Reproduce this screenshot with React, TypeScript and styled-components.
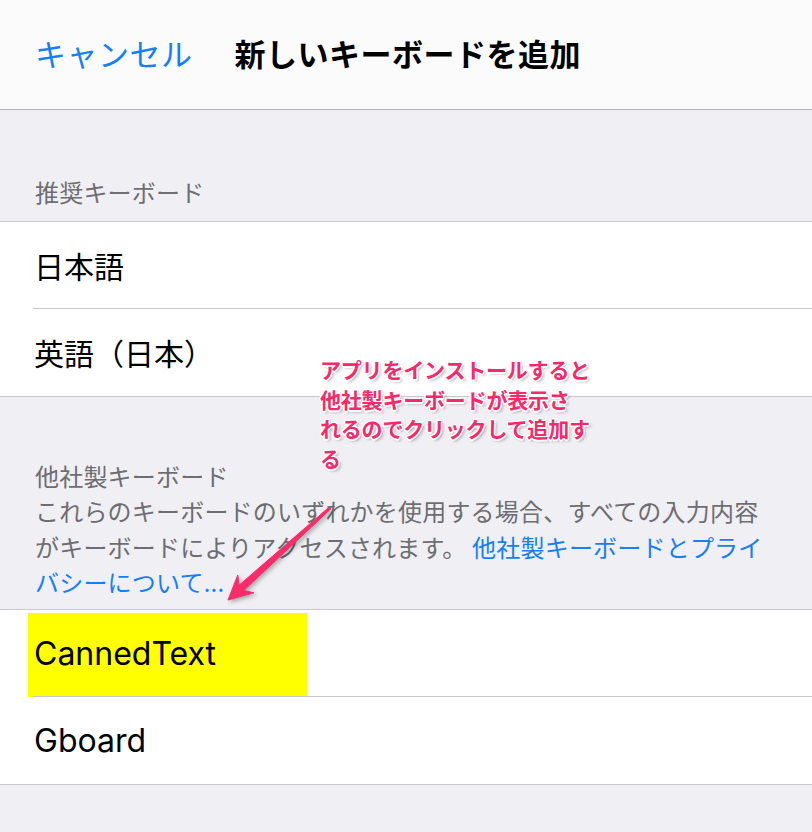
import React from "react";
import styled, { createGlobalStyle } from "styled-components";

const Global = createGlobalStyle`
  html, body { margin: 0; padding: 0; }
  body {
    font-family: Inter, "Noto Sans CJK JP", sans-serif;
    background: #efeff4;
  }
`;

const Page = styled.div`
  position: relative;
  width: 812px;
  min-height: 832px;
  background: #efeff4;
  overflow: hidden;
`;

const NavBar = styled.header`
  height: 110px;
  box-sizing: border-box;
  padding: 0 0 5px 35px;
  background: #fbfbfc;
  border-bottom: 1px solid #b4b4b8;
  display: flex;
  align-items: center;
  gap: 42px;
`;

const CancelButton = styled.span`
  font-family: "Noto Sans CJK JP", sans-serif;
  font-size: 31px;
  color: #147efb;
  letter-spacing: 0.5px;
`;

const Title = styled.h1`
  margin: 0;
  font-family: "Noto Sans CJK JP", sans-serif;
  font-size: 31px;
  font-weight: 700;
  color: #000;
  letter-spacing: 0.5px;
`;

const SectionText = styled.div<{ $top: number; $bottom: number }>`
  width: 735px;
  padding: ${(p) => p.$top}px 0 ${(p) => p.$bottom}px 35px;
  font-family: "Noto Sans CJK JP", sans-serif;
  font-size: 24px;
  line-height: 35.5px;
  letter-spacing: 0.2px;
  color: #6d6d72;
`;

const Link = styled.span`
  color: #147efb;
`;

const Group = styled.div`
  background: #fff;
  border-top: 1px solid #c8c7cc;
  border-bottom: 1px solid #c8c7cc;
`;

const Row = styled.div<{ $divider?: boolean; $latin?: boolean }>`
  position: relative;
  height: 87px;
  display: flex;
  align-items: center;
  padding-left: 34px;
  font-size: ${(p) => (p.$latin ? 32 : 30)}px;
  color: #000;
  ${(p) =>
    p.$divider
      ? `
    &::after {
      content: "";
      position: absolute;
      left: 33px;
      right: 0;
      bottom: 0;
      height: 1px;
      background: #c8c7cc;
    }
  `
      : ""}
`;

const Label = styled.span`
  position: relative;
  z-index: 1;
`;

const Highlight = styled.div`
  position: absolute;
  left: 28px;
  top: 3px;
  width: 279px;
  height: 84px;
  background: #ffff00;
  z-index: 0;
`;

const Note = styled.div`
  position: absolute;
  left: 320px;
  top: 355px;
  font-family: "Noto Sans CJK JP", sans-serif;
  font-size: 21px;
  font-weight: 700;
  line-height: 29.5px;
  color: #f8286a;
  letter-spacing: -0.2px;
  text-shadow:
    -1px -1px 0 #fff, 1px -1px 0 #fff, -1px 1px 0 #fff, 1px 1px 0 #fff,
    0 -1.5px 0 #fff, 0 1.5px 0 #fff, -1.5px 0 0 #fff, 1.5px 0 0 #fff,
    2px 2px 3px rgba(0, 0, 0, 0.35);
  z-index: 3;
`;

const ArrowLayer = styled.svg`
  position: absolute;
  left: 0;
  top: 0;
  width: 812px;
  height: 832px;
  pointer-events: none;
  z-index: 4;
  filter: drop-shadow(2px 2px 2px rgba(0, 0, 0, 0.3));
`;

export default function App() {
  return (
    <Page>
      <Global />
      <NavBar>
        <CancelButton>キャンセル</CancelButton>
        <Title>新しいキーボードを追加</Title>
      </NavBar>

      <SectionText $top={64} $bottom={11}>推奨キーボード</SectionText>
      <Group>
        <Row $divider>日本語</Row>
        <Row>英語（日本）</Row>
      </Group>

      <SectionText $top={61} $bottom={9}>
        他社製キーボード
        <br />
        これらのキーボードのいずれかを使用する場合、すべての入力内容がキーボードによりアクセスされます。{" "}
        <Link>他社製キーボードとプライバシーについて...</Link>
      </SectionText>
      <Group>
        <Row $divider $latin>
          <Highlight />
          <Label>CannedText</Label>
        </Row>
        <Row $latin>Gboard</Row>
      </Group>

      <Note>
        アプリをインストールすると
        <br />
        他社製キーボードが表示さ
        <br />
        れるのでクリックして追加す
        <br />る
      </Note>

      <ArrowLayer viewBox="0 0 812 832">
        <polygon
          points="329.2,507.1 239,585.3 237.8,575 228,600 253.9,592.8 243.7,590.5 330.8,508.9"
          fill="#f72d6b"
          stroke="#f72d6b"
          strokeWidth="1"
          strokeLinejoin="round"
        />
      </ArrowLayer>
    </Page>
  );
}
